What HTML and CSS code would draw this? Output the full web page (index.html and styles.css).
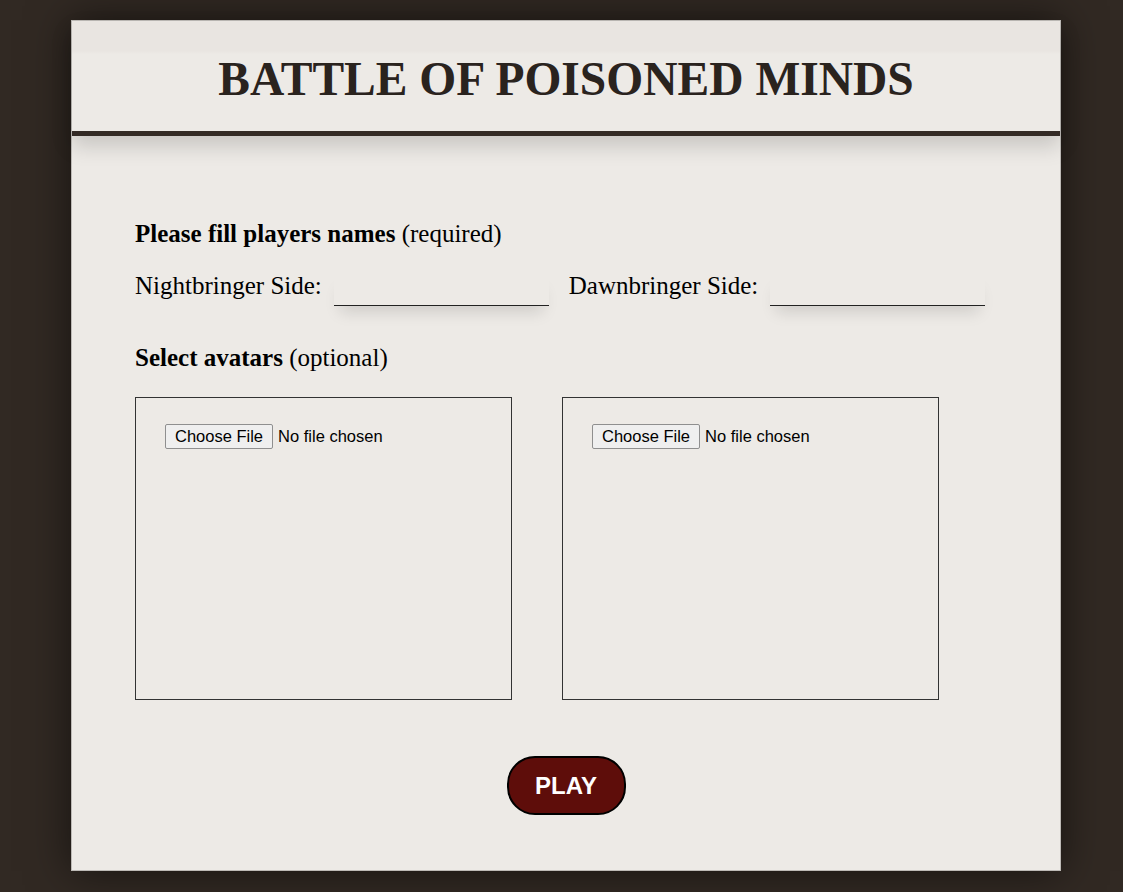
FILE: index.html
```html
<!DOCTYPE html>
<html>
<head>
<meta charset="utf-8">
<link rel="stylesheet" href="styles.css">
</head>
<body>
<div class="card">
  <header class="header">
    <h1 class="title">BATTLE OF POISONED MINDS</h1>
  </header>
  <main class="content">
    <p class="section-label"><b>Please fill players names</b> (required)</p>
    <div class="names">
      <label class="name-field">Nightbringer Side: <input type="text" class="name-input"></label>
      <label class="name-field">Dawnbringer Side: <input type="text" class="name-input"></label>
    </div>
    <p class="section-label avatars-label"><b>Select avatars</b> (optional)</p>
    <div class="avatars">
      <div class="avatar-box"><input type="file" class="file-input"></div>
      <div class="avatar-box"><input type="file" class="file-input"></div>
    </div>
    <div class="play-row">
      <button class="play-btn">PLAY</button>
    </div>
  </main>
</div>
</body>
</html>
```
FILE: styles.css
```css
html, body {
  margin: 0;
  padding: 0;
}
body {
  background: #312923;
  font-family: "Liberation Serif", "Times New Roman", serif;
  color: #000;
  padding: 20px 0 21px;
  min-height: 892px;
  box-sizing: border-box;
}
.card {
  width: 988px;
  margin: 0 auto 0 71px;
  background: #edeae6;
  border: 1px solid #bdbab6;
  box-shadow: 0 0 40px rgba(0,0,0,0.55);
  height: 849px;
  display: flex;
  flex-direction: column;
}
.header {
  background: linear-gradient(#e9e5e1 0, #e9e5e1 30px, #edeae6 33px);
  border-bottom: 5px solid #332a25;
  height: 110px;
  display: flex;
  align-items: center;
  justify-content: center;
  box-shadow: 0 10px 20px rgba(0,0,0,0.16);
  position: relative;
  z-index: 1;
}
.title {
  margin: 6px 0 0 0;
  font-size: 47.5px;
  font-weight: bold;
  color: #2a231e;
}
.content {
  padding: 83px 63px 0 63px;
}
.section-label {
  margin: 0;
  font-size: 25px;
  line-height: 29px;
}
.names {
  display: flex;
  gap: 20px;
  margin-top: 24px;
}
.name-field {
  font-size: 25px;
  display: flex;
  align-items: flex-start;
  gap: 12px;
}
.name-input {
  width: 215px;
  height: 33px;
  border: none;
  border-bottom: 1px solid #222;
  background: transparent;
  box-shadow: 0 12px 16px -6px rgba(0,0,0,0.13);
  outline: none;
  padding: 0;
  font-size: 20px;
  font-family: inherit;
}
.avatars-label {
  margin-top: 37px;
}
.avatars {
  display: flex;
  gap: 50px;
  margin-top: 25px;
}
.avatar-box {
  border: 1px solid #333;
  padding: 26px 0 0 29px;
  width: 346px;
  height: 275px;
}
.file-input {
  font-family: "Liberation Sans", Arial, sans-serif;
  font-size: 16.5px;
  color: #000;
}
.file-input::file-selector-button {
  font-family: "Liberation Sans", Arial, sans-serif;
  font-size: 16.5px;
  padding: 2px 9px;
  margin-right: 5px;
  border: 1px solid #8f8f8f;
  border-radius: 2px;
  background: #efefef;
  color: #000;
}
.play-row {
  display: flex;
  justify-content: center;
  margin-top: 56px;
}
.play-btn {
  width: 119px;
  height: 59px;
  background: #5e0d0a;
  color: #fff;
  border: 2px solid #000;
  border-radius: 28px;
  font-family: "Liberation Sans", Arial, sans-serif;
  font-weight: bold;
  font-size: 24px;
  padding: 0;
  box-sizing: border-box;
}
```
